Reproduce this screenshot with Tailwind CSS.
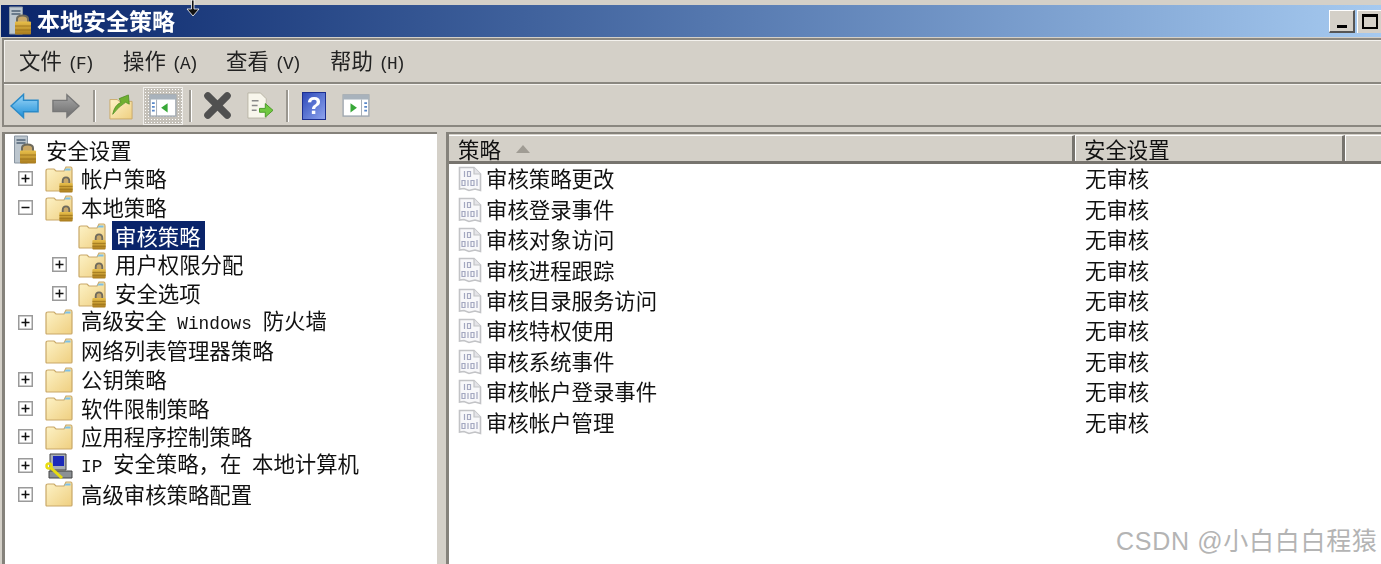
<!DOCTYPE html>
<html lang="zh"><head><meta charset="utf-8"><title>本地安全策略</title>
<script src="https://cdn.jsdelivr.net/npm/@tailwindcss/browser@4"></script></head>
<body class="m-0 overflow-hidden bg-white">
<svg width="0" height="0" class="absolute">
<defs>
<linearGradient id="fg" x1="0" y1="0" x2="1" y2="1"><stop offset="0" stop-color="#fdf3c8"/><stop offset="1" stop-color="#efcf80"/></linearGradient>
<linearGradient id="lk" x1="0" y1="0" x2="0" y2="1"><stop offset="0" stop-color="#e8bf4a"/><stop offset="1" stop-color="#a87a1c"/></linearGradient>
<linearGradient id="ar" x1="0" y1="0" x2="0" y2="1"><stop offset="0" stop-color="#9fd8f8"/><stop offset="1" stop-color="#1d8fd8"/></linearGradient>
<linearGradient id="gr" x1="0" y1="0" x2="0" y2="1"><stop offset="0" stop-color="#a8a8a8"/><stop offset="1" stop-color="#6c6c6c"/></linearGradient>
<symbol id="folder" viewBox="0 0 28 26"><path d="M1 5Q1 3 3 3H9L11 5H19L21 1H26Q27 1 27 3V24Q27 25 26 25H2Q1 25 1 24Z" fill="url(#fg)" stroke="#c9a868" stroke-width="1.2"/><path d="M19 4.500L21 2.500H25.500V4.500Z" fill="#7cc0e8"/></symbol>
<symbol id="lock" viewBox="0 0 16 18"><path d="M4.500 8V5.500Q4.500 1.500 8 1.500T11.500 5.500V8" fill="#c9a868" stroke="#6e6a5c" stroke-width="2"/><rect x="1" y="7.500" width="14" height="10" rx="1" fill="url(#lk)"/><path d="M1 11H15M1 14H15" stroke="#8c6514" stroke-width=".7"/></symbol>
<symbol id="policy" viewBox="0 0 24 26"><path d="M1.500 1.500H16L22.500 8V24.500L17 23L11 24.500L6 22.500L1.500 23Z" fill="#f8f8fa" stroke="#c2c3c6" stroke-width="1.600"/><path d="M16 1.500V8H22.500" fill="#e4e4e8" stroke="#c2c3c6" stroke-width="1.200"/><path d="M6.500 5V11M9.500 5.500h3v5h-3zM4 14.500h3v5h-3zM10 14V20M13 14.500h3v5h-3zM19 13V20" fill="none" stroke="#a4a8c0" stroke-width="1.200"/></symbol>
<symbol id="server" viewBox="0 0 24 30"><path d="M1 1H14V28H1Z" fill="#bcc6ce" stroke="#8a96a2"/><path d="M3 5H12M3 8H12" stroke="#4e6276" stroke-width="1.500"/><path d="M8.500 16V13Q8.500 9.500 14 9.500T19.500 13V16" fill="#c9a868" stroke="#6e6a5c" stroke-width="2"/><rect x="6.500" y="15.500" width="16" height="13" rx="1" fill="url(#lk)"/><path d="M6.500 20H22.500M6.500 24H22.500" stroke="#8c6514" stroke-width=".7"/></symbol>
<symbol id="plus" viewBox="0 0 15 15"><rect x=".75" y=".75" width="13.500" height="13.500" fill="#fff" stroke="#9a9a9a" stroke-width="1.500"/><path d="M3.500 7.500H11.500M7.500 3.500V11.500" stroke="#111" stroke-width="1.500"/></symbol>
<symbol id="minus" viewBox="0 0 15 15"><rect x=".75" y=".75" width="13.500" height="13.500" fill="#fff" stroke="#9a9a9a" stroke-width="1.500"/><path d="M3.500 7.500H11.500" stroke="#111" stroke-width="1.500"/></symbol>
</defs></svg>

<div class="relative w-[1381px] h-[564px] overflow-hidden bg-[#d4d0c8] blur-[0.45px] text-[21.4px] leading-none text-[#111] font-['Noto_Sans_CJK_SC',sans-serif]">

<header class="mt-[5px] h-[32px] ml-px flex items-center bg-gradient-to-r from-[#0a246a] to-[#a6caf0]">
  <svg class="ml-[7px] w-[25px] h-[30px]" viewBox="0 0 24 30"><use href="#server"/></svg>
  <span class="ml-[4px] -translate-y-px text-white font-bold text-[23px]">本地安全策略</span>
  <div class="ml-auto flex gap-[2px] h-[23px]">
    <div class="w-[26px] bg-[#d4d0c8] border-t border-l border-white border-r-2 border-b-2 border-r-[#555] border-b-[#555] flex items-end justify-center pb-[3px]"><div class="w-[10px] h-[3px] bg-black"></div></div>
    <div class="w-[24px] bg-[#d4d0c8] border-t border-l border-white flex items-center justify-center"><div class="w-[16px] h-[15px] border-2 border-t-[3px] border-black"></div></div>
  </div>
</header>

<nav class="h-[44px] mt-[1px] ml-[2px] border-t-[2px] border-[#8a8780] border-l-[2px] shadow-[inset_1px_1px_0_#f4f2ee] flex items-center text-[#222]">
  <span class="ml-[15px] w-[104px]">文件<span class="font-['Liberation_Mono',monospace] text-[17.800px] ml-[6px] tracking-[-2.500px]">(F)</span></span>
  <span class="w-[103px]">操作<span class="font-['Liberation_Mono',monospace] text-[17.800px] ml-[6px] tracking-[-2.500px]">(A)</span></span>
  <span class="w-[104px]">查看<span class="font-['Liberation_Mono',monospace] text-[17.800px] ml-[6px] tracking-[-2.500px]">(V)</span></span>
  <span>帮助<span class="font-['Liberation_Mono',monospace] text-[17.800px] ml-[6px] tracking-[-2.500px]">(H)</span></span>
</nav>

<div class="h-[45px] ml-[2px] border-t-[2px] border-[#8a8780] border-l-[2px] border-b-[2px] border-b-[#8a8780] shadow-[inset_0_1px_0_#f4f2ee] flex items-center pt-[2px]">
  <svg class="ml-[6px] w-[29px] h-[26px]" viewBox="0 0 30 26"><path d="M1 13L14 1V7H29V19H14V25Z" fill="url(#ar)" stroke="#2a8ac8" stroke-width="1.500"/></svg>
  <svg class="ml-[13px] w-[28px] h-[26px]" viewBox="0 0 30 26"><path d="M29 13L16 1V7H1V19H16V25Z" fill="url(#gr)" stroke="#777" stroke-width="1.500"/></svg>
  <div class="ml-[13px] w-[3px] h-[32px] bg-[#9a9790] border-r border-white"></div>
  <svg class="ml-[13px] w-[24px] h-[28px]" viewBox="0 0 26 30"><path d="M1 8H9L11 10H25V29H1Z" fill="url(#fg)" stroke="#c9a868"/><path d="M4 24Q6 14 13 11L11 7L21 3L22 13L18 11Q11 15 4 24Z" fill="#70b030" stroke="#4a8a20" stroke-width=".8"/></svg>
  <div class="ml-[10px] w-[40px] h-[38px] bg-[radial-gradient(#fff_1px,#c4c0b8_1px)] bg-[length:3px_3px] border border-[#f0eeea] flex items-center justify-center">
    <svg class="w-[28px] h-[23px]" viewBox="0 0 30 25"><rect x="1" y="1" width="28" height="23" fill="#fff" stroke="#a0a8b0" stroke-width="1.500"/><rect x="1" y="1" width="28" height="5" fill="#a8b2bc"/><path d="M8 6V24" stroke="#a0a8b0"/><path d="M3 10H6M3 14H6M3 18H6" stroke="#5a88c8" stroke-width="2"/><path d="M20 10V20L13 15Z" fill="#38a838"/></svg>
  </div>
  <div class="ml-[6px] w-[3px] h-[32px] bg-[#9a9790] border-r border-white"></div>
  <svg class="ml-[11px] w-[29px] h-[29px]" viewBox="0 0 30 30"><path d="M5 5L25 25M25 5L5 25" stroke="#505050" stroke-width="7.500" stroke-linecap="round"/></svg>
  <svg class="ml-[14px] w-[27px] h-[27px]" viewBox="0 0 28 28"><path d="M2 1H15L21 7V27H2Z" fill="#f8f6ec" stroke="#b8b4a4"/><path d="M6 9H13M6 14H12M6 19H11" stroke="#888" stroke-width="1.500"/><path d="M14 17H20V12L28 19L20 26V21H14Z" fill="#70c840" stroke="#4a9a28"/></svg>
  <div class="ml-[13px] w-[3px] h-[32px] bg-[#9a9790] border-r border-white"></div>
  <div class="ml-[13px] w-[24px] h-[28px] bg-gradient-to-br from-[#2f48b8] to-[#90a4ee] border border-[#1c2f90] flex items-center justify-center text-white font-bold text-[24px] font-['Liberation_Sans',sans-serif]">?</div>
  <svg class="ml-[16px] w-[28px] h-[23px]" viewBox="0 0 30 25"><rect x="1" y="1" width="28" height="23" fill="#fff" stroke="#a0a8b0" stroke-width="1.500"/><rect x="1" y="1" width="28" height="5" fill="#a8b2bc"/><path d="M21 6V24" stroke="#a0a8b0"/><path d="M24 10H27M24 14H27M24 18H27" stroke="#5a88c8" stroke-width="2"/><path d="M9 10V20L16 15Z" fill="#38a838"/></svg>
</div>

<main class="mt-[5px] ml-[2px] flex h-[433px]">
  <aside class="w-[435px] bg-white border-l-[3px] border-t-[2px] border-[#85827b] pt-[2px] overflow-hidden [&>div>span:last-child]:-translate-y-px">
    <div class="h-[28.67px] flex items-center"><svg class="ml-[8px] w-[25px] h-[30px]" viewBox="0 0 24 30"><use href="#server"/></svg><span class="ml-[8px]">安全设置</span></div>
    <div class="h-[28.67px] flex items-center"><svg class="ml-[13px] w-[15px] h-[15px]" viewBox="0 0 15 15"><use href="#plus"/></svg><span class="relative ml-[12px] w-[28px] h-[26px]"><svg class="w-[28px] h-[26px]"><use href="#folder"/></svg><svg class="absolute left-[13px] top-[10px] w-[16px] h-[17px]"><use href="#lock"/></svg></span><span class="ml-[8px]">帐户策略</span></div>
    <div class="h-[28.67px] flex items-center"><svg class="ml-[13px] w-[15px] h-[15px]" viewBox="0 0 15 15"><use href="#minus"/></svg><span class="relative ml-[12px] w-[28px] h-[26px]"><svg class="w-[28px] h-[26px]"><use href="#folder"/></svg><svg class="absolute left-[13px] top-[10px] w-[16px] h-[17px]"><use href="#lock"/></svg></span><span class="ml-[8px]">本地策略</span></div>
    <div class="h-[28.67px] flex items-center"><span class="relative ml-[73px] w-[28px] h-[26px]"><svg class="w-[28px] h-[26px]"><use href="#folder"/></svg><svg class="absolute left-[13px] top-[10px] w-[16px] h-[17px]"><use href="#lock"/></svg></span><span class="ml-[6px] pl-[3px] pr-[4px] h-[29px] flex items-center bg-[#0a246a] text-white">审核策略</span></div>
    <div class="h-[28.67px] flex items-center"><svg class="ml-[47px] w-[15px] h-[15px]" viewBox="0 0 15 15"><use href="#plus"/></svg><span class="relative ml-[11px] w-[28px] h-[26px]"><svg class="w-[28px] h-[26px]"><use href="#folder"/></svg><svg class="absolute left-[13px] top-[10px] w-[16px] h-[17px]"><use href="#lock"/></svg></span><span class="ml-[9px]">用户权限分配</span></div>
    <div class="h-[28.67px] flex items-center"><svg class="ml-[47px] w-[15px] h-[15px]" viewBox="0 0 15 15"><use href="#plus"/></svg><span class="relative ml-[11px] w-[28px] h-[26px]"><svg class="w-[28px] h-[26px]"><use href="#folder"/></svg><svg class="absolute left-[13px] top-[10px] w-[16px] h-[17px]"><use href="#lock"/></svg></span><span class="ml-[9px]">安全选项</span></div>
    <div class="h-[28.67px] flex items-center"><svg class="ml-[13px] w-[15px] h-[15px]" viewBox="0 0 15 15"><use href="#plus"/></svg><svg class="ml-[12px] w-[28px] h-[26px]"><use href="#folder"/></svg><span class="ml-[8px] whitespace-pre">高级安全<span class="font-['Liberation_Mono',monospace] text-[17.800px]"> Windows </span>防火墙</span></div>
    <div class="h-[28.67px] flex items-center"><svg class="ml-[40px] w-[28px] h-[26px]"><use href="#folder"/></svg><span class="ml-[8px]">网络列表管理器策略</span></div>
    <div class="h-[28.67px] flex items-center"><svg class="ml-[13px] w-[15px] h-[15px]" viewBox="0 0 15 15"><use href="#plus"/></svg><svg class="ml-[12px] w-[28px] h-[26px]"><use href="#folder"/></svg><span class="ml-[8px]">公钥策略</span></div>
    <div class="h-[28.67px] flex items-center"><svg class="ml-[13px] w-[15px] h-[15px]" viewBox="0 0 15 15"><use href="#plus"/></svg><svg class="ml-[12px] w-[28px] h-[26px]"><use href="#folder"/></svg><span class="ml-[8px]">软件限制策略</span></div>
    <div class="h-[28.67px] flex items-center"><svg class="ml-[13px] w-[15px] h-[15px]" viewBox="0 0 15 15"><use href="#plus"/></svg><svg class="ml-[12px] w-[28px] h-[26px]"><use href="#folder"/></svg><span class="ml-[8px]">应用程序控制策略</span></div>
    <div class="h-[28.67px] flex items-center"><svg class="ml-[13px] w-[15px] h-[15px]" viewBox="0 0 15 15"><use href="#plus"/></svg><svg class="ml-[12px] w-[28px] h-[26px]" viewBox="0 0 28 26"><path d="M5 1H21V17H5Z" fill="#a8aeb4" stroke="#444"/><rect x="8" y="3" width="11" height="10" fill="#1c2ab8"/><path d="M4 18H27V25H4Z" fill="#8c9094" stroke="#444"/><circle cx="4" cy="13" r="2.500" fill="none" stroke="#e8dc10" stroke-width="2.500"/><path d="M6 15L17 25" stroke="#e8dc10" stroke-width="3"/></svg><span class="ml-[8px] whitespace-pre"><span class="font-['Liberation_Mono',monospace] text-[17.800px]">IP </span>安全策略，在<span class="font-['Liberation_Mono',monospace] text-[17.800px]"> </span>本地计算机</span></div>
    <div class="h-[28.67px] flex items-center"><svg class="ml-[13px] w-[15px] h-[15px]" viewBox="0 0 15 15"><use href="#plus"/></svg><svg class="ml-[12px] w-[28px] h-[26px]"><use href="#folder"/></svg><span class="ml-[8px]">高级审核策略配置</span></div>
  </aside>

  <section class="ml-[9px] flex-1 bg-white border-l-[3px] border-t-[2px] border-[#85827b] overflow-hidden">
    <div class="flex h-[30px] bg-[#d4d0c8] border-b-[3px] border-[#77746e] pt-[1px]">
      <div class="w-[626px] flex items-center border-r-[3px] border-r-[#77746e] border-t border-t-white"><span class="ml-[9px]">策略</span><svg class="ml-[15px] w-[14px] h-[8px]" viewBox="0 0 14 8"><path d="M7 0L14 8H0Z" fill="#a09c94"/></svg></div>
      <div class="w-[270px] flex items-center border-r-[3px] border-r-[#77746e] border-t border-t-white border-l border-l-white"><span class="ml-[8px]">安全设置</span></div>
      <div class="flex-1 border-t border-t-white border-l border-l-white"></div>
    </div>
    <ul class="[&>li>span]:-translate-y-px">
      <li class="h-[30.4px] flex items-center"><svg class="ml-[9px] w-[24px] h-[26px]"><use href="#policy"/></svg><span class="ml-[4px] w-[599px]">审核策略更改</span><span>无审核</span></li>
      <li class="h-[30.4px] flex items-center"><svg class="ml-[9px] w-[24px] h-[26px]"><use href="#policy"/></svg><span class="ml-[4px] w-[599px]">审核登录事件</span><span>无审核</span></li>
      <li class="h-[30.4px] flex items-center"><svg class="ml-[9px] w-[24px] h-[26px]"><use href="#policy"/></svg><span class="ml-[4px] w-[599px]">审核对象访问</span><span>无审核</span></li>
      <li class="h-[30.4px] flex items-center"><svg class="ml-[9px] w-[24px] h-[26px]"><use href="#policy"/></svg><span class="ml-[4px] w-[599px]">审核进程跟踪</span><span>无审核</span></li>
      <li class="h-[30.4px] flex items-center"><svg class="ml-[9px] w-[24px] h-[26px]"><use href="#policy"/></svg><span class="ml-[4px] w-[599px]">审核目录服务访问</span><span>无审核</span></li>
      <li class="h-[30.4px] flex items-center"><svg class="ml-[9px] w-[24px] h-[26px]"><use href="#policy"/></svg><span class="ml-[4px] w-[599px]">审核特权使用</span><span>无审核</span></li>
      <li class="h-[30.4px] flex items-center"><svg class="ml-[9px] w-[24px] h-[26px]"><use href="#policy"/></svg><span class="ml-[4px] w-[599px]">审核系统事件</span><span>无审核</span></li>
      <li class="h-[30.4px] flex items-center"><svg class="ml-[9px] w-[24px] h-[26px]"><use href="#policy"/></svg><span class="ml-[4px] w-[599px]">审核帐户登录事件</span><span>无审核</span></li>
      <li class="h-[30.4px] flex items-center"><svg class="ml-[9px] w-[24px] h-[26px]"><use href="#policy"/></svg><span class="ml-[4px] w-[599px]">审核帐户管理</span><span>无审核</span></li>
    </ul>
  </section>
</main>

<svg class="absolute left-[184px] top-0 w-[18px] h-[18px]" viewBox="0 0 18 18"><path d="M7.500 0H10V9H15L9 16L3 9H7.500Z" fill="#111" stroke="#fff" stroke-width=".8"/></svg>
</div>
<div class="absolute left-[1116px] top-[526px] text-[25px] leading-[30px] tracking-[0.7px] text-[#b4b4b4] whitespace-nowrap font-['Liberation_Sans','Noto_Sans_CJK_SC',sans-serif]">CSDN @小白白白程猿</div>
</body></html>
